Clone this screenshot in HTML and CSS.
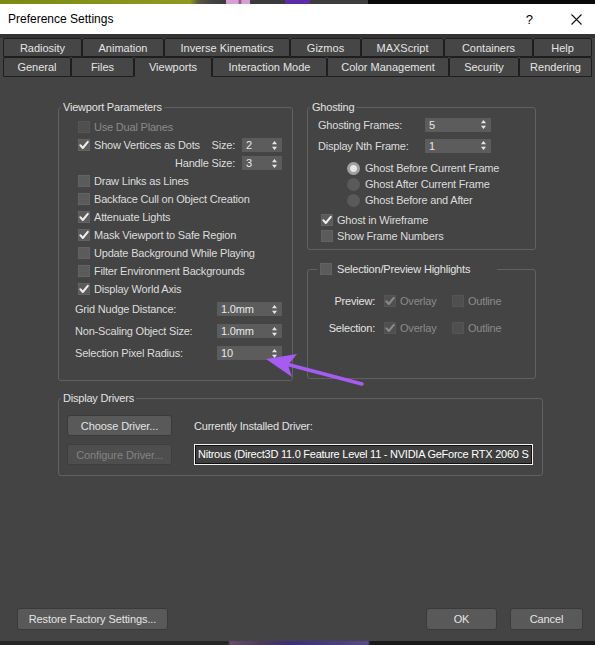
FILE: index.html
```html
<!DOCTYPE html>
<html>
<head>
<meta charset="utf-8">
<title>Preference Settings</title>
<link rel="stylesheet" href="styles.css">
</head>
<body>
<div class="screen">
  <div class="topstrip"></div>
  <div class="titlebar">
    <span class="title">Preference Settings</span>
    <span class="help">?</span>
    <svg class="close" width="11" height="11" viewBox="0 0 11 11"><path d="M0.5 0.5 L10.5 10.5 M10.5 0.5 L0.5 10.5" stroke="#111" stroke-width="1.1" fill="none"/></svg>
  </div>
  <div class="dialog">
    <div class="tabs">
      <div class="tabrow">
        <div class="tab t-rad">Radiosity</div>
        <div class="tab t-anim">Animation</div>
        <div class="tab t-ik">Inverse Kinematics</div>
        <div class="tab t-giz">Gizmos</div>
        <div class="tab t-max">MAXScript</div>
        <div class="tab t-cont">Containers</div>
        <div class="tab t-help">Help</div>
      </div>
      <div class="tabrow row2">
        <div class="tab t-gen">General</div>
        <div class="tab t-files">Files</div>
        <div class="tab t-vp active">Viewports</div>
        <div class="tab t-im">Interaction Mode</div>
        <div class="tab t-cm">Color Management</div>
        <div class="tab t-sec">Security</div>
        <div class="tab t-ren">Rendering</div>
      </div>
    </div>

    <div class="content">
      <div class="cols">
        <fieldset class="group vp">
          <legend>Viewport Parameters</legend>
          <div class="vp-body">
            <div class="row chk disabled"><span class="cb"></span><span>Use Dual Planes</span></div>
            <div class="row chk">
              <span class="cb on"><svg viewBox="0 0 12 12"><path d="M2.3 6.2 L4.8 9 L9.8 2.8"/></svg></span><span>Show Vertices as Dots</span>
              <span class="sizegrp"><span class="slabel">Size:</span><span class="spin w40"><span>2</span><svg class="arr" width="5" height="9" viewBox="0 0 5 9"><path d="M2.5 0 L5 3.2 L0 3.2Z M0 5.8 L5 5.8 L2.5 9Z"/></svg></span></span>
            </div>
            <div class="row chk end">
              <span class="slabel">Handle Size:</span><span class="spin w40"><span>3</span><svg class="arr" width="5" height="9" viewBox="0 0 5 9"><path d="M2.5 0 L5 3.2 L0 3.2Z M0 5.8 L5 5.8 L2.5 9Z"/></svg></span>
            </div>
            <div class="row chk"><span class="cb"></span><span>Draw Links as Lines</span></div>
            <div class="row chk"><span class="cb"></span><span>Backface Cull on Object Creation</span></div>
            <div class="row chk"><span class="cb on"><svg viewBox="0 0 12 12"><path d="M2.3 6.2 L4.8 9 L9.8 2.8"/></svg></span><span>Attenuate Lights</span></div>
            <div class="row chk"><span class="cb on"><svg viewBox="0 0 12 12"><path d="M2.3 6.2 L4.8 9 L9.8 2.8"/></svg></span><span>Mask Viewport to Safe Region</span></div>
            <div class="row chk"><span class="cb"></span><span>Update Background While Playing</span></div>
            <div class="row chk"><span class="cb"></span><span>Filter Environment Backgrounds</span></div>
            <div class="row chk"><span class="cb on"><svg viewBox="0 0 12 12"><path d="M2.3 6.2 L4.8 9 L9.8 2.8"/></svg></span><span>Display World Axis</span></div>
            <div class="row field"><span>Grid Nudge Distance:</span><span class="spin w65"><span>1.0mm</span><svg class="arr" width="5" height="9" viewBox="0 0 5 9"><path d="M2.5 0 L5 3.2 L0 3.2Z M0 5.8 L5 5.8 L2.5 9Z"/></svg></span></div>
            <div class="row field"><span>Non-Scaling Object Size:</span><span class="spin w65"><span>1.0mm</span><svg class="arr" width="5" height="9" viewBox="0 0 5 9"><path d="M2.5 0 L5 3.2 L0 3.2Z M0 5.8 L5 5.8 L2.5 9Z"/></svg></span></div>
            <div class="row field"><span>Selection Pixel Radius:</span><span class="spin w65"><span>10</span><svg class="arr" width="5" height="9" viewBox="0 0 5 9"><path d="M2.5 0 L5 3.2 L0 3.2Z M0 5.8 L5 5.8 L2.5 9Z"/></svg></span></div>
          </div>
        </fieldset>

        <div class="rightcol">
          <fieldset class="group ghost">
            <legend>Ghosting</legend>
            <div class="ghost-body">
              <div class="grow"><span class="glabel">Ghosting Frames:</span><span class="spin w66"><span>5</span><svg class="arr" width="5" height="9" viewBox="0 0 5 9"><path d="M2.5 0 L5 3.2 L0 3.2Z M0 5.8 L5 5.8 L2.5 9Z"/></svg></span></div>
              <div class="grow"><span class="glabel">Display Nth Frame:</span><span class="spin w66"><span>1</span><svg class="arr" width="5" height="9" viewBox="0 0 5 9"><path d="M2.5 0 L5 3.2 L0 3.2Z M0 5.8 L5 5.8 L2.5 9Z"/></svg></span></div>
              <div class="radios">
                <div class="rrow"><span class="radio on"></span><span>Ghost Before Current Frame</span></div>
                <div class="rrow"><span class="radio"></span><span>Ghost After Current Frame</span></div>
                <div class="rrow"><span class="radio"></span><span>Ghost Before and After</span></div>
              </div>
              <div class="gchecks">
                <div class="rrow"><span class="cb on"><svg viewBox="0 0 12 12"><path d="M2.3 6.2 L4.8 9 L9.8 2.8"/></svg></span><span>Ghost in Wireframe</span></div>
                <div class="rrow"><span class="cb"></span><span>Show Frame Numbers</span></div>
              </div>
            </div>
          </fieldset>

          <fieldset class="group sel">
            <legend><span class="legchk"><span class="cb"></span><span>Selection/Preview Highlights</span></span></legend>
            <div class="sel-grid">
              <span class="slab">Preview:</span>
              <span class="opt disabled"><span class="cb on"><svg viewBox="0 0 12 12"><path d="M2.3 6.2 L4.8 9 L9.8 2.8"/></svg></span><span>Overlay</span></span>
              <span class="opt disabled"><span class="cb"></span><span>Outline</span></span>
              <span class="slab">Selection:</span>
              <span class="opt disabled"><span class="cb on"><svg viewBox="0 0 12 12"><path d="M2.3 6.2 L4.8 9 L9.8 2.8"/></svg></span><span>Overlay</span></span>
              <span class="opt disabled"><span class="cb"></span><span>Outline</span></span>
            </div>
          </fieldset>
        </div>
      </div>

      <fieldset class="group drivers">
        <legend>Display Drivers</legend>
        <div class="drv-grid">
          <button class="btn">Choose Driver...</button>
          <span class="drvlabel">Currently Installed Driver:</span>
          <button class="btn" disabled>Configure Driver...</button>
          <div class="drvbox">Nitrous (Direct3D 11.0 Feature Level 11 - NVIDIA GeForce RTX 2060 S</div>
        </div>
      </fieldset>
    </div>

    <div class="footer">
      <button class="btn restore">Restore Factory Settings...</button>
      <span class="spacer"></span>
      <button class="btn ok">OK</button>
      <button class="btn cancel">Cancel</button>
    </div>
  </div>
  <div class="bottomstrip"></div>

  <svg class="arrow" width="595" height="645" viewBox="0 0 595 645">
    <path d="M362 384 L286 364" stroke="#a65cf0" stroke-width="3.5" stroke-linecap="round" fill="none"/>
    <path d="M266 359 L297 354 L288 365 L292 377 Z" fill="#a65cf0"/>
  </svg>
</div>
</body>
</html>
```
FILE: styles.css
```css
* { box-sizing: border-box; }
html, body { margin: 0; padding: 0; }
body {
  width: 595px;
  height: 645px;
  overflow: hidden;
  background: #444444;
  font-family: "Liberation Sans", Arial, sans-serif;
  font-size: 11px;
  letter-spacing: -0.2px;
  color: #dcdcdc;
}
.screen {
  position: relative;
  width: 595px;
  height: 645px;
  display: flex;
  flex-direction: column;
}
.topstrip {
  height: 4px;
  background: linear-gradient(90deg,
    #7b8a14 0, #8c9a22 190px, #5a5a3a 198px, #444 210px, #3c3c3c 226px,
    #d79fd3 226px, #d79fd3 238px, #6a4a6a 240px, #d79fd3 242px, #d79fd3 250px,
    #3a3a3a 250px, #3a3a3a 285px, #5b2ca8 285px, #5b2ca8 310px,
    #3d3d3d 310px, #3d3d3d 368px, #0a0a0a 368px, #0a0a0a 100%);
}
.titlebar {
  height: 30px;
  background: #ffffff;
  display: flex;
  align-items: center;
  padding: 0 13px 0 8px;
  color: #000;
  font-size: 12px;
  letter-spacing: 0;
}
.title { flex: 1; }
.help { font-size: 13px; margin-right: 38px; }
.close { display: block; }

.dialog {
  flex: 1;
  display: flex;
  flex-direction: column;
  background: #444444;
}
.tabs {
  padding: 4px 3px 0 3px;
  background: linear-gradient(#333 0, #333 4px, #444 4px);
}
.tabrow {
  display: flex;
  height: 19px;
}
.tabrow.row2 { height: 20px; }
.tab {
  flex: none;
  border: 1px solid #1e1e1e;
  border-radius: 2px 2px 0 0;
  background: #464646;
  color: #e4e4e4;
  display: flex;
  align-items: center;
  justify-content: center;
  white-space: nowrap;
  font-size: 11px;
  letter-spacing: 0;
}
.t-rad { width: 79px; }
.t-anim { width: 82px; }
.t-ik { width: 126px; }
.t-giz { width: 71px; }
.t-max { width: 83px; }
.t-cont { width: 89px; }
.t-help { width: 59px; }
.t-gen { width: 68px; }
.t-files { width: 63px; }
.t-vp { width: 78px; }
.t-im { width: 115px; }
.t-cm { width: 122px; }
.t-sec { width: 70px; }
.t-ren { width: 73px; }
.row2 .tab.active {
  border-bottom-color: #444;
  background: #444;
}

.content {
  flex: 1;
  padding: 23px 52px 0 58px;
}
.cols {
  display: flex;
  align-items: flex-start;
  gap: 14px;
}
fieldset.group {
  margin: 0;
  border: 1px solid #616161;
  border-radius: 3px;
  padding: 0 0 0 2px;
  min-width: 0;
}
fieldset.group legend {
  padding: 0 2px;
  line-height: 14px;
  height: 14px;
  color: #e2e2e2;
}
fieldset.vp { width: 235px; }
.vp-body {
  padding: 4px 10px 16px 0;
}
.row {
  display: flex;
  align-items: center;
  white-space: nowrap;
}
.row.chk { height: 18px; padding-left: 17px; }
.row.chk.end { justify-content: flex-end; }
.row.field {
  height: 22px;
  padding-left: 14px;
  justify-content: space-between;
}
.sizegrp { margin-left: auto; display: flex; align-items: center; }
.slabel { margin-right: 7px; }
.disabled { color: #8a8a8a; }

.cb {
  display: inline-block;
  flex: none;
  width: 12px;
  height: 12px;
  background: #5b5b5b;
  border: 1px solid #626262;
  margin-right: 4px;
}
.cb svg {
  display: block;
  width: 12px;
  height: 12px;
  margin: -1px 0 0 -1px;
}
.cb svg path {
  fill: none;
  stroke: #eeeeee;
  stroke-width: 2;
  stroke-linecap: round;
  stroke-linejoin: round;
}
.disabled .cb { background: #4f4f4f; border-color: #555; }
.disabled .cb svg path { stroke: #8a8a8a; }

.spin {
  display: flex;
  align-items: center;
  justify-content: space-between;
  height: 14px;
  background: #5c5c5c;
  padding: 0 5px 0 4px;
  color: #e8e8e8;
  font-size: 11px;
  flex: none;
}
.spin .arr { fill: #e6e6e6; display: block; }
.w40 { width: 40px; }
.w65 { width: 65px; }
.w66 { width: 66px; }

.rightcol {
  width: 229px;
  display: flex;
  flex-direction: column;
  gap: 12px;
}
fieldset.ghost { width: 229px; padding-left: 2px; }
.ghost-body { padding: 0 0 5px 8px; }
.grow {
  display: flex;
  align-items: center;
  height: 21px;
}
.glabel { width: 107px; }
.radios { margin-top: 4px; padding-left: 29px; }
.rrow {
  display: flex;
  align-items: center;
  height: 16px;
  white-space: nowrap;
}
.radio {
  display: inline-block;
  width: 13px;
  height: 13px;
  border-radius: 50%;
  background: #5a5a5a;
  margin-right: 5px;
  flex: none;
}
.radio.on {
  background: radial-gradient(circle, #e6e6e6 0, #e6e6e6 3px, #a0a0a0 4px);
}
.gchecks { margin-top: 4px; padding-left: 3px; }

fieldset.sel { width: 229px; padding-left: 9px; }
fieldset.sel legend { padding: 0 27px 0 3px; }
.legchk { display: inline-flex; align-items: center; }
.legchk .cb { margin-right: 5px; }
.sel-grid {
  margin-left: -9px;
  padding: 15px 0 40px 0;
  display: grid;
  grid-template-columns: 67px 59px auto;
  column-gap: 9px;
  row-gap: 7px;
  grid-auto-rows: 20px;
  align-items: center;
}
.slab { text-align: right; color: #e2e2e2; }
.opt { display: flex; align-items: center; }

fieldset.drivers {
  width: 485px;
  margin-top: 10px;
}
.drv-grid {
  display: grid;
  grid-template-columns: 105px 1fr;
  grid-template-rows: 21px 21px;
  column-gap: 22px;
  row-gap: 8px;
  padding: 10px 9px 10px 6px;
  align-items: center;
}
.btn {
  font-family: "Liberation Sans", Arial, sans-serif;
  font-size: 11px;
  letter-spacing: -0.1px;
  color: #e4e4e4;
  background: #595959;
  border: 1px solid #3a3a3a;
  border-radius: 3px;
  height: 21px;
  padding: 0;
  margin: 0;
}
.btn:disabled {
  background: #4e4e4e;
  color: #838383;
  border-color: #3e3e3e;
}
.drvlabel { color: #e2e2e2; }
.drvbox {
  height: 21px;
  border: 1px solid #f2f2f2;
  box-shadow: inset 0 0 0 1px #111;
  background: #3e3e3e;
  color: #ffffff;
  white-space: nowrap;
  overflow: hidden;
  padding: 0 0 0 3px;
  line-height: 19px;
  letter-spacing: -0.25px;
}

.footer {
  display: flex;
  align-items: center;
  padding: 0 12px 11px 17px;
  gap: 13px;
}
.footer .btn { height: 22px; }
.restore { width: 151px; }
.spacer { flex: 1; }
.ok { width: 71px; }
.cancel { width: 73px; }

.bottomstrip {
  height: 4px;
  background: linear-gradient(90deg,
    #262626 0, #262626 228px, #6a4a6a 230px, #4a3a5a 260px,
    #3b2f7a 290px, #4a3f80 340px, #5a4a8a 368px, #1a1a1a 370px, #1a1a1a 100%);
}
.arrow {
  position: absolute;
  left: 0;
  top: 0;
  pointer-events: none;
}
```
